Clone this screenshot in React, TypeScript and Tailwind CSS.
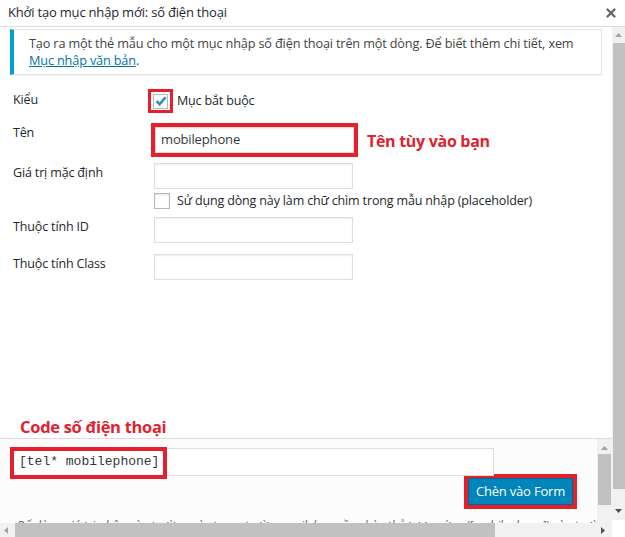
import { X } from "lucide-react";

const Up = ({ className = "" }: { className?: string }) => (
  <svg width="7" height="4" viewBox="0 0 7 4" className={className}>
    <path d="M0 4 L3.5 0 L7 4 Z" fill="currentColor" />
  </svg>
);
const Down = ({ className = "" }: { className?: string }) => (
  <svg width="7" height="4" viewBox="0 0 7 4" className={className}>
    <path d="M0 0 L3.5 4 L7 0 Z" fill="currentColor" />
  </svg>
);
const Left = ({ className = "" }: { className?: string }) => (
  <svg width="4" height="7" viewBox="0 0 4 7" className={className}>
    <path d="M4 0 L0 3.5 L4 7 Z" fill="currentColor" />
  </svg>
);
const Right = ({ className = "" }: { className?: string }) => (
  <svg width="4" height="7" viewBox="0 0 4 7" className={className}>
    <path d="M0 0 L4 3.5 L0 7 Z" fill="currentColor" />
  </svg>
);

const Check = () => (
  <svg width="12" height="12" viewBox="0 0 12 12">
    <path d="M1.5 6.2 L4.6 9.2 L10.6 2.2" fill="none" stroke="#1e8cbe" strokeWidth="2.4" />
  </svg>
);

const Field = ({ value = "" }: { value?: string }) => (
  <div className="w-[199px] h-[26px] border border-[#ddd] bg-white shadow-[inset_0_1px_2px_rgba(0,0,0,0.07)] pl-[5px] flex items-center text-[13px] text-[#32373c]">
    {value}
  </div>
);

export default function App() {
  return (
    <div className="w-[625px] h-[537px] bg-white overflow-hidden flex flex-col font-['Open_Sans',sans-serif] text-[#23282d]">
      {/* header */}
      <div className="h-[27px] shrink-0 border-b border-[#dcdcdc] flex items-center justify-between pl-[8px] pr-[7px]">
        <span className="text-[13px] tracking-[-0.2px]">Khởi tạo mục nhập mới: số điện thoại</span>
        <X size={14} strokeWidth={4} className="text-[#666]" />
      </div>

      <div className="flex flex-1 min-h-0">
        <div className="w-[612px] flex flex-col">
          {/* form area */}
          <div className="h-[411px] shrink-0 flex flex-col px-[10px] pt-[2px]">
            <div className="h-[46px] border border-[#e5e5e5] border-l-[4px] border-l-[#00a0d2] bg-white shadow-[0_1px_1px_rgba(0,0,0,0.04)] pl-[15px] pt-[5px] text-[12.7px] leading-[17px] text-[#444] tracking-[-0.15px]">
              Tạo ra một thẻ mẫu cho một mục nhập số điện thoại trên một dòng. Để biết thêm chi tiết, xem
              <br />
              <span className="text-[#0073aa] underline">Mục nhập văn bản</span>.
            </div>

            <div className="px-[3px] text-[12.5px] tracking-[-0.15px]">
              <div className="flex items-start mt-[14px] h-[24px]">
                <span className="w-[135px] pt-[2px]">Kiểu</span>
                <div className="w-[25px] h-[24px] border-[3px] border-[#e3202b] flex items-center justify-center">
                  <div className="w-[15px] h-[15px] border border-[#b4b9be] bg-white flex items-center justify-center">
                    <Check />
                  </div>
                </div>
                <span className="ml-[4px] pt-[3px]">Mục bắt buộc</span>
              </div>

              <div className="flex items-start mt-[10px]">
                <span className="w-[138px] pt-[1px]">Tên</span>
                <div className="border-[4px] border-[#e3202b]">
                  <Field value="mobilephone" />
                </div>
                <span className="ml-[9px] mt-[6px] text-[16px] font-bold text-[#dc2430] tracking-[-0.3px]">Tên tùy vào bạn</span>
              </div>

              <div className="flex items-start mt-[6px]">
                <span className="w-[141px] pt-[1px]">Giá trị mặc định</span>
                <div className="flex flex-col">
                  <Field />
                  <label className="flex items-center mt-[4px] h-[16px]">
                    <span className="w-[16px] h-[16px] border border-[#b4b9be] bg-white shadow-[inset_0_1px_2px_rgba(0,0,0,0.1)]" />
                    <span className="ml-[7px]">Sử dụng dòng này làm chữ chìm trong mẫu nhập (placeholder)</span>
                  </label>
                </div>
              </div>

              <div className="flex items-start mt-[8px]">
                <span className="w-[141px] pt-[1px]">Thuộc tính ID</span>
                <Field />
              </div>

              <div className="flex items-start mt-[11px]">
                <span className="w-[141px] pt-[1px]">Thuộc tính Class</span>
                <Field />
              </div>
            </div>

            <div className="mt-auto pb-0 pl-[10px] text-[16.5px] leading-[22px] font-bold text-[#dc2430] tracking-[-0.3px]">
              Code số điện thoại
            </div>
          </div>

          {/* insert box */}
          <div className="flex-1 min-h-0 border-t border-[#dcdcdc] bg-[#fcfcfc] flex">
            <div className="flex-1 px-[10px] pt-[9px] overflow-hidden">
              <div className="relative w-[484px] h-[28px] border border-[#ddd] bg-white flex items-center pl-[8px] font-['Liberation_Mono',monospace] text-[13px] text-[#32373c]">
                [tel* mobilephone]
                <div className="absolute left-[-1px] top-[-2px] w-[157px] h-[32px] border-[4px] border-[#e3202b]" />
              </div>
              <div className="flex justify-end pr-[10px] mt-[-2px]">
                <div className="border-[4px] border-[#e3202b]">
                  <button className="h-[27px] px-[7px] bg-[#0085ba] text-white text-[13px] tracking-[-0.2px] border border-[#006799] flex items-center">
                    Chèn vào Form
                  </button>
                </div>
              </div>
              <p className="mt-[8px] pl-[7px] text-[12px] italic text-[#666] whitespace-nowrap">
                Để dùng giá trị nhập vào trường này trong trường mail, bạn cần chèn thẻ tương ứng ([mobilephone]) vào trường Nội
              </p>
            </div>
            <div className="w-[15px] bg-[#f1f1f1] flex flex-col items-center pt-[7px]">
              <Up className="text-[#a3a3a3]" />
              <div className="w-[13px] h-[51px] bg-[#c1c1c1] mt-[4px]" />
            </div>
          </div>

          {/* horizontal scrollbar */}
          <div className="h-[14px] shrink-0 bg-[#f1f1f1] flex items-center">
            <Left className="ml-[4px] text-[#a3a3a3]" />
            <div className="ml-[7px] w-[480px] h-[14px] bg-[#c1c1c1]" />
            <Right className="ml-[106px] text-[#505050]" />
          </div>
        </div>

        {/* outer scrollbar */}
        <div className="w-[13px] flex flex-col">
          <div className="h-[493px] bg-[#f1f1f1] flex flex-col items-center pt-[6px]">
            <Up className="text-[#a3a3a3]" />
            <div className="w-[12px] h-[446px] bg-[#c1c1c1] mt-[6px]" />
            <Down className="mt-[20px] text-[#505050]" />
          </div>
        </div>
      </div>
    </div>
  );
}
